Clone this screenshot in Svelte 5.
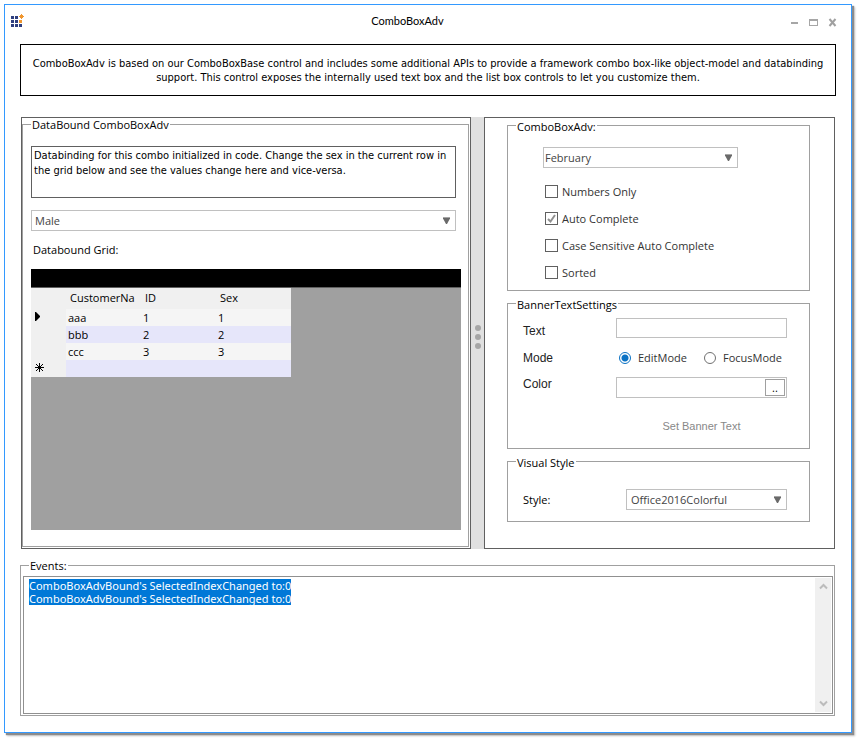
<script>
  const months = ['January', 'February', 'March', 'April', 'May', 'June', 'July', 'August', 'September', 'October', 'November', 'December'];
  const rows = [
    { name: 'aaa', id: 1, sex: 1 },
    { name: 'bbb', id: 2, sex: 2 },
    { name: 'ccc', id: 3, sex: 3 }
  ];
  const events = [
    "ComboBoxAdvBound's SelectedIndexChanged to:0",
    "ComboBoxAdvBound's SelectedIndexChanged to:0"
  ];
  let options = $state([
    { label: 'Numbers Only', on: false },
    { label: 'Auto Complete', on: true },
    { label: 'Case Sensitive Auto Complete', on: false },
    { label: 'Sorted', on: false }
  ]);
  let sex = $state('Male');
  let month = $state('February');
  let mode = $state('EditMode');
  let style = $state('Office2016Colorful');
</script>

{#snippet combo(id, label, items, value, onpick)}
  <span class="combo {id}">
    <select {id} aria-label={label} {value} onchange={(e) => onpick(e.currentTarget.value)}>
      {#each items as item}<option>{item}</option>{/each}
    </select>
    <svg width="7" height="7" viewBox="0 0 7 7" aria-hidden="true">
      <path d="M0 0h7v1.5L4 7H3L0 1.5z" fill="#6a6a6a" />
      <path d="M0 0h7v1H0z" fill="#a6a6a6" />
    </svg>
  </span>
{/snippet}

<div class="window">
  <header>
    <svg class="logo" width="14" height="14" viewBox="0 0 14 14" aria-hidden="true">
      <path fill="#2f3f7f" d="M0 2h3v3H0zM4 2h3v3H4zM0 6h3v3H0zM4 6h3v3H4zM0 10h3v3H0zM4 10h3v3H4zM8 10h3v3H8z" />
      <path fill="#f0962e" d="M8 6h3v3H8zM10 0h1v1h1v1h1v1h-1v1h-1v1h-1V4H9V3H8V2h1V1h1z" />
    </svg>
    <h1>ComboBoxAdv</h1>
    <div class="caption-buttons">
      <button aria-label="Minimize"><svg width="9" height="9" viewBox="0 0 9 9"><path d="M1 4h7v2H1z" fill="#a6a6a6" /></svg></button>
      <button aria-label="Maximize"><svg width="9" height="9" viewBox="0 0 9 9"><path fill-rule="evenodd" d="M0 1h9v7H0zM1 3v4h7V3z" fill="#a6a6a6" /></svg></button>
      <button aria-label="Close"><svg width="9" height="9" viewBox="0 0 9 9"><path d="M1.5 1l6 7M7.500 1l-6 7" stroke="#a0a0a0" stroke-width="2" /></svg></button>
    </div>
  </header>

  <p class="intro">
    ComboBoxAdv is based on our ComboBoxBase control and includes some additional APIs to provide a framework combo box-like object-model and databinding support. This control exposes the internally used text box and the list box controls to let you customize them.
  </p>

  <main>
    <section class="pane left">
      <fieldset>
        <legend>DataBound ComboBoxAdv</legend>
        <p class="note">Databinding for this combo initialized in code. Change the sex in the current row in the grid below and see the values change here and vice-versa.</p>
        {@render combo('sex', 'Sex', ['Male', 'Female'], sex, (v) => (sex = v))}
        <h2>Databound Grid:</h2>
        <div class="grid">
          <div class="grid-caption"></div>
          <table>
            <thead>
              <tr><th class="mark"></th><th>CustomerNa</th><th>ID</th><th>Sex</th></tr>
            </thead>
            <tbody>
              {#each rows as row, i}
                <tr>
                  <td class="mark">
                    {#if i === 0}
                      <svg width="9" height="9" viewBox="0 0 9 9" aria-label="Current row"><path d="M0 0h1l4 4v1L1 9H0z" /></svg>
                    {/if}
                  </td>
                  <td>{row.name}</td><td>{row.id}</td><td>{row.sex}</td>
                </tr>
              {/each}
              <tr>
                <td class="mark">
                  <svg width="9" height="9" viewBox="0 0 9 9" aria-label="New row"><path d="M4.500 0v9M0 4.500h9M1 1l7 7M8 1L1 8" stroke="#000" /></svg>
                </td>
                <td></td><td></td><td></td>
              </tr>
            </tbody>
          </table>
        </div>
      </fieldset>
    </section>

    <div class="splitter" aria-hidden="true"><i></i><i></i><i></i></div>

    <section class="pane right">
      <fieldset class="options">
        <legend>ComboBoxAdv:</legend>
        {@render combo('month', 'Month', months, month, (v) => (month = v))}
        <div class="checks">
          {#each options as option}
            <label><input type="checkbox" bind:checked={option.on} />{option.label}</label>
          {/each}
        </div>
      </fieldset>

      <fieldset class="banner">
        <legend>BannerTextSettings</legend>
        <label class="name low" for="banner-text">Text</label>
        <input id="banner-text" class="field" type="text" />
        <span class="name">Mode</span>
        <div class="radios">
          <label><input type="radio" name="mode" value="EditMode" bind:group={mode} />EditMode</label>
          <label><input type="radio" name="mode" value="FocusMode" bind:group={mode} />FocusMode</label>
        </div>
        <label class="name high" for="banner-color">Color</label>
        <div class="field color">
          <input id="banner-color" type="text" />
          <button aria-label="Choose color">..</button>
        </div>
        <button class="apply">Set Banner Text</button>
      </fieldset>

      <fieldset class="visual">
        <legend>Visual Style</legend>
        <label for="style">Style:</label>
        {@render combo('style', 'Style', ['Office2016Colorful', 'Office2016White', 'Metro'], style, (v) => (style = v))}
      </fieldset>
    </section>
  </main>

  <fieldset class="events">
    <legend>Events:</legend>
    <div class="log">
      <div class="lines" role="log">
        <div class="selection">{events.join('\n')}</div>
      </div>
      <div class="scrollbar">
        <button aria-label="Scroll up"><svg width="9" height="7" viewBox="0 0 9 7"><path d="M1 5.500l3.500-3.500L8 5.500" fill="none" stroke="#bcbcbc" stroke-width="2" /></svg></button>
        <button aria-label="Scroll down"><svg width="9" height="7" viewBox="0 0 9 7"><path d="M1 1.500L4.500 5 8 1.500" fill="none" stroke="#bcbcbc" stroke-width="2" /></svg></button>
      </div>
    </div>
  </fieldset>
</div>

<style>
  :global(body) {
    background: #fff;
  }
  * {
    box-sizing: border-box;
  }
  .window {
    margin: 4px 5px 6px 4px;
    padding: 0 15px 16px;
    border: 1px solid #3399ff;
    box-shadow: 2px 2px 1px #8c8c8c, 3px 3px 2px #c4c4c4;
    background: #fff;
    color: #000;
    font: 11px/14px 'Open Sans', 'Noto Sans', sans-serif;
  }
  h1, h2, p {
    margin: 0;
    font-size: 11px;
    font-weight: normal;
  }
  button, input, select {
    margin: 0;
    font: inherit;
    color: inherit;
  }
  button {
    padding: 0;
    border: 0;
    background: none;
  }
  svg {
    display: block;
  }
  header {
    display: flex;
    align-items: center;
    height: 39px;
    margin: 0 -10px;
    padding: 0 9px 8px 0;
  }
  .logo {
    margin-left: 1px;
  }
  h1 {
    flex: 1;
    text-align: center;
    font-family: Lato, 'Open Sans', sans-serif;
  }
  .caption-buttons {
    display: flex;
    gap: 10px;
    padding-top: 4px;
  }
  .intro {
    padding: 12px 4px 10px;
    border: 1px solid #000;
    text-align: center;
    font-family: 'DejaVu Sans Condensed', 'Open Sans', sans-serif;
  }
  main {
    display: grid;
    grid-template-columns: minmax(0, 450fr) 13px minmax(0, 351fr);
    margin: 21px 1px 10px;
  }
  .pane {
    border: 1px solid #606060;
  }
  fieldset {
    min-width: 0;
    margin: 0;
    border: 1px solid #a0a0a0;
  }
  legend {
    padding: 0 1px;
    line-height: 13px;
  }
  .combo {
    display: grid;
    align-items: center;
    color: #444;
  }
  .combo > * {
    grid-area: 1 / 1;
  }
  .combo svg {
    justify-self: end;
    margin-right: 6px;
    pointer-events: none;
  }
  select {
    appearance: none;
    width: 100%;
    height: 21px;
    padding: 0 20px 0 3px;
    border: 1px solid #c0c0c0;
    border-radius: 0;
    background: #fff;
  }
  .left {
    padding: 0 1px 1px 0;
  }
  .left fieldset {
    height: 100%;
    padding: 15px 7px 16px 8px;
  }
  .note {
    min-height: 52px;
    margin-right: 5px;
    padding: 1px 0 0 2px;
    border: 1px solid #606060;
    font-family: 'DejaVu Sans Condensed', 'Open Sans', sans-serif;
    line-height: 15px;
  }
  .combo.sex {
    margin: 12px 5px 12px 0;
  }
  h2 {
    padding-left: 2px;
    margin-bottom: 12px;
  }
  .grid {
    min-height: 261px;
    background: #a0a0a0;
  }
  .grid-caption {
    height: 19px;
    background: #000;
    border-bottom: 1px solid #606060;
  }
  table {
    width: 260px;
    table-layout: fixed;
    border-collapse: collapse;
  }
  th, td {
    height: 17px;
    padding: 0 2px;
    text-align: left;
    font-weight: normal;
    white-space: nowrap;
    overflow: hidden;
  }
  th {
    height: 21px;
    padding: 0 4px 2px;
    background: #f0f0f0;
  }
  td {
    background: #f5f5f5;
  }
  tr:nth-child(even) td {
    background: #e6e6fa;
  }
  tr .mark.mark {
    width: 35px;
    padding: 0 4px 2px;
    background: #f0f0f0;
  }
  .splitter {
    display: flex;
    flex-direction: column;
    align-items: center;
    justify-content: center;
    gap: 3px;
    padding-top: 8px;
    background: #e0e0e0;
  }
  .splitter i {
    width: 6px;
    height: 6px;
    border-radius: 50%;
    background: #a6a6a6;
  }
  .right {
    display: flex;
    flex-direction: column;
    gap: 5px;
    padding: 0 24px 26px 22px;
  }
  .right legend {
    margin-left: -7px;
    padding-top: 2px;
  }
  .options {
    padding: 14px 71px 4px 35px;
  }
  .right .options legend {
    margin-left: -27px;
  }
  .month select {
    padding-left: 1px;
  }
  .style select {
    padding-left: 4px;
  }
  .checks {
    padding: 10px 0 0 2px;
    color: #333;
  }
  .checks label {
    display: flex;
    align-items: center;
    gap: 4px;
    height: 27px;
    white-space: nowrap;
  }
  input[type='checkbox'] {
    appearance: none;
    width: 13px;
    height: 13px;
    border: 1px solid #606060;
    background: #fff;
  }
  input[type='checkbox']:checked {
    background: url("data:image/svg+xml,%3Csvg xmlns='http://www.w3.org/2000/svg' viewBox='0 0 11 11'%3E%3Cpath d='M2 6l2.500 2.500L9 2' fill='none' stroke='%23909090' stroke-width='2'/%3E%3C/svg%3E");
  }
  .banner {
    display: grid;
    grid-template-columns: 93px 1fr;
    grid-template-rows: 20px 39px 21px 38px;
    align-items: center;
    padding: 7px 22px 12px 15px;
  }
  .name {
    color: #222;
    font-family: 'Liberation Sans', Arial, sans-serif;
    font-size: 12px;
  }
  .low {
    align-self: end;
  }
  .high {
    align-self: start;
  }
  .field {
    width: 100%;
    height: 100%;
    border: 1px solid #c0c0c0;
    background: #fff;
  }
  .color {
    display: flex;
    padding: 1px;
  }
  .color input {
    flex: 1;
    min-width: 0;
    padding: 0 2px;
    border: 0;
  }
  .color button {
    width: 20px;
    border: 1px solid #a0a0a0;
    line-height: 14px;
  }
  .radios {
    display: flex;
    justify-content: space-between;
    padding: 0 5px 0 3px;
    color: #333;
  }
  .radios label {
    display: flex;
    align-items: center;
    gap: 7px;
  }
  input[type='radio'] {
    appearance: none;
    width: 12px;
    height: 12px;
    border: 1px solid #707070;
    border-radius: 50%;
  }
  input[type='radio']:checked {
    border-color: #0a72c4;
    background: radial-gradient(circle, #0a72c4 3px, #fff 4px);
  }
  .apply {
    grid-column: 2;
    align-self: end;
    justify-self: center;
    height: 20px;
    color: #888;
    font-family: 'Liberation Sans', Arial, sans-serif;
  }
  .visual {
    display: grid;
    grid-template-columns: 103px 1fr;
    align-items: center;
    padding: 20px 22px 11px 15px;
  }
  .events {
    margin-right: 1px;
    padding: 4px 1px 1px 2px;
  }
  .events legend {
    margin-left: 6px;
  }
  .log {
    display: flex;
    min-height: 138px;
    padding: 1px;
    border: 1px solid #909090;
  }
  .lines {
    flex: 1;
    padding: 1px 4px;
    line-height: 13px;
  }
  .selection {
    width: fit-content;
    background: #0078d7;
    color: #fff;
    font-family: 'Noto Sans', sans-serif;
    white-space: pre-line;
  }
  .scrollbar {
    display: flex;
    flex-direction: column;
    justify-content: space-between;
    width: 16px;
    background: #f0f0f0;
  }
  .scrollbar button {
    display: grid;
    place-items: center;
    height: 17px;
  }
</style>
